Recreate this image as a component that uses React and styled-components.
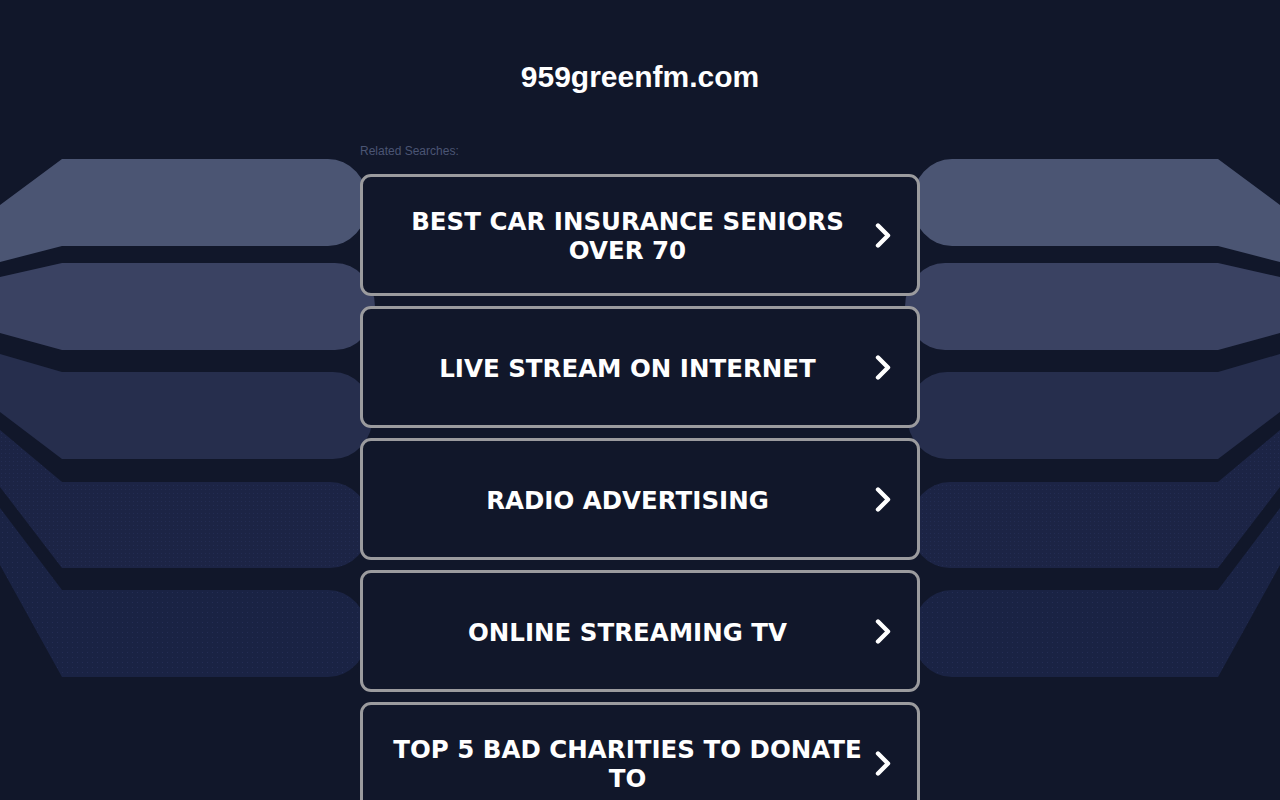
import styled, { createGlobalStyle } from "styled-components";

const GlobalStyle = createGlobalStyle`
    html, body {
        margin: 0;
        padding: 0;
        background: #11172a;
    }
    body {
        font-family: "Liberation Sans", Arial, sans-serif;
        color: #fff;
    }
`;

const Page = styled.div`
    position: relative;
    min-height: 800px;
    overflow: hidden;
`;

const Backdrop = styled.svg`
    position: absolute;
    top: 0;
    left: 0;
    width: 1280px;
    height: 800px;
    z-index: 0;
`;

const Content = styled.main`
    position: relative;
    z-index: 1;
    width: 560px;
    margin: 0 auto;
    padding-top: 59px;
`;

const Title = styled.h1`
    margin: 0;
    font-size: 30px;
    line-height: 36px;
    font-weight: bold;
    text-align: center;
`;

const Related = styled.p`
    margin: 49px 0 16px;
    font-size: 12px;
    line-height: 14px;
    color: #4b5574;
`;

const List = styled.ul`
    list-style: none;
    margin: 0;
    padding: 0;
    display: flex;
    flex-direction: column;
    gap: 10px;
`;

const Card = styled.li`
    box-sizing: border-box;
    height: 122px;
    border: 3px solid #9b9b9e;
    border-radius: 11px;
    background: #11172a;
    padding: 0 26px 0 20px;
    display: flex;
    align-items: center;
    gap: 3px;
    cursor: pointer;

    > span {
        flex: 1;
        padding-top: 2px;
        text-align: center;
        font-family: "DejaVu Sans", Verdana, sans-serif;
        font-weight: bold;
        font-size: 24.5px;
        line-height: 29px;
        color: #fff;
    }
    > svg {
        flex: none;
    }
`;

// left side bands, the right side is the mirror image
const bands = [
    { top: 159, bottom: 246, edgeTop: 205, edgeBottom: 262, end: 368, fill: "#4b5573" },
    { top: 263, bottom: 350, edgeTop: 277, edgeBottom: 333, end: 375, fill: "#3a4262" },
    { top: 372, bottom: 459, edgeTop: 354, edgeBottom: 412, end: 373, fill: "#262e4d" },
    { top: 482, bottom: 568, edgeTop: 430, edgeBottom: 487, end: 370, fill: "url(#dotsA)" },
    { top: 590, bottom: 677, edgeTop: 508, edgeBottom: 565, end: 368, fill: "url(#dotsB)" },
];

const bandPath = ({ top, bottom, edgeTop, edgeBottom, end }) => {
    const ry = (bottom - top) / 2;
    const rx = 40;
    return `M0,${edgeTop} L62,${top} L${end - rx},${top} A${rx},${ry} 0 0 1 ${end - rx},${bottom} L62,${bottom} L0,${edgeBottom} Z`;
};

const Chevron = () => (
    <svg width="16" height="27" viewBox="0 0 16 27">
        <path
            d="M3 3.5 L13 13.5 L3 23.5"
            fill="none"
            stroke="#fff"
            strokeWidth="4.4"
            strokeLinecap="round"
            strokeLinejoin="round"
        />
    </svg>
);

const searches = [
    "BEST CAR INSURANCE SENIORS OVER 70",
    "LIVE STREAM ON INTERNET",
    "RADIO ADVERTISING",
    "ONLINE STREAMING TV",
    "TOP 5 BAD CHARITIES TO DONATE TO",
];

const App = () => {
    return (
        <Page>
            <GlobalStyle />
            <Backdrop viewBox="0 0 1280 800" aria-hidden="true">
                <defs>
                    <pattern id="dotsA" width="4" height="4" patternUnits="userSpaceOnUse">
                        <rect width="4" height="4" fill="#1c2445" />
                        <rect x="1" y="1" width="1" height="1" fill="#232c52" />
                    </pattern>
                    <pattern id="dotsB" width="5" height="5" patternUnits="userSpaceOnUse">
                        <rect width="5" height="5" fill="#1a2344" />
                        <rect x="2" y="2" width="1" height="1" fill="#242d54" />
                    </pattern>
                </defs>
                <g>
                    {bands.map((b, i) => (
                        <path key={i} d={bandPath(b)} fill={b.fill} />
                    ))}
                </g>
                <g transform="translate(1280 0) scale(-1 1)">
                    {bands.map((b, i) => (
                        <path key={i} d={bandPath(b)} fill={b.fill} />
                    ))}
                </g>
            </Backdrop>
            <Content>
                <Title>959greenfm.com</Title>
                <Related>Related Searches:</Related>
                <List>
                    {searches.map((s) => (
                        <Card key={s}>
                            <span>{s}</span>
                            <Chevron />
                        </Card>
                    ))}
                </List>
            </Content>
        </Page>
    );
};

export default App;
